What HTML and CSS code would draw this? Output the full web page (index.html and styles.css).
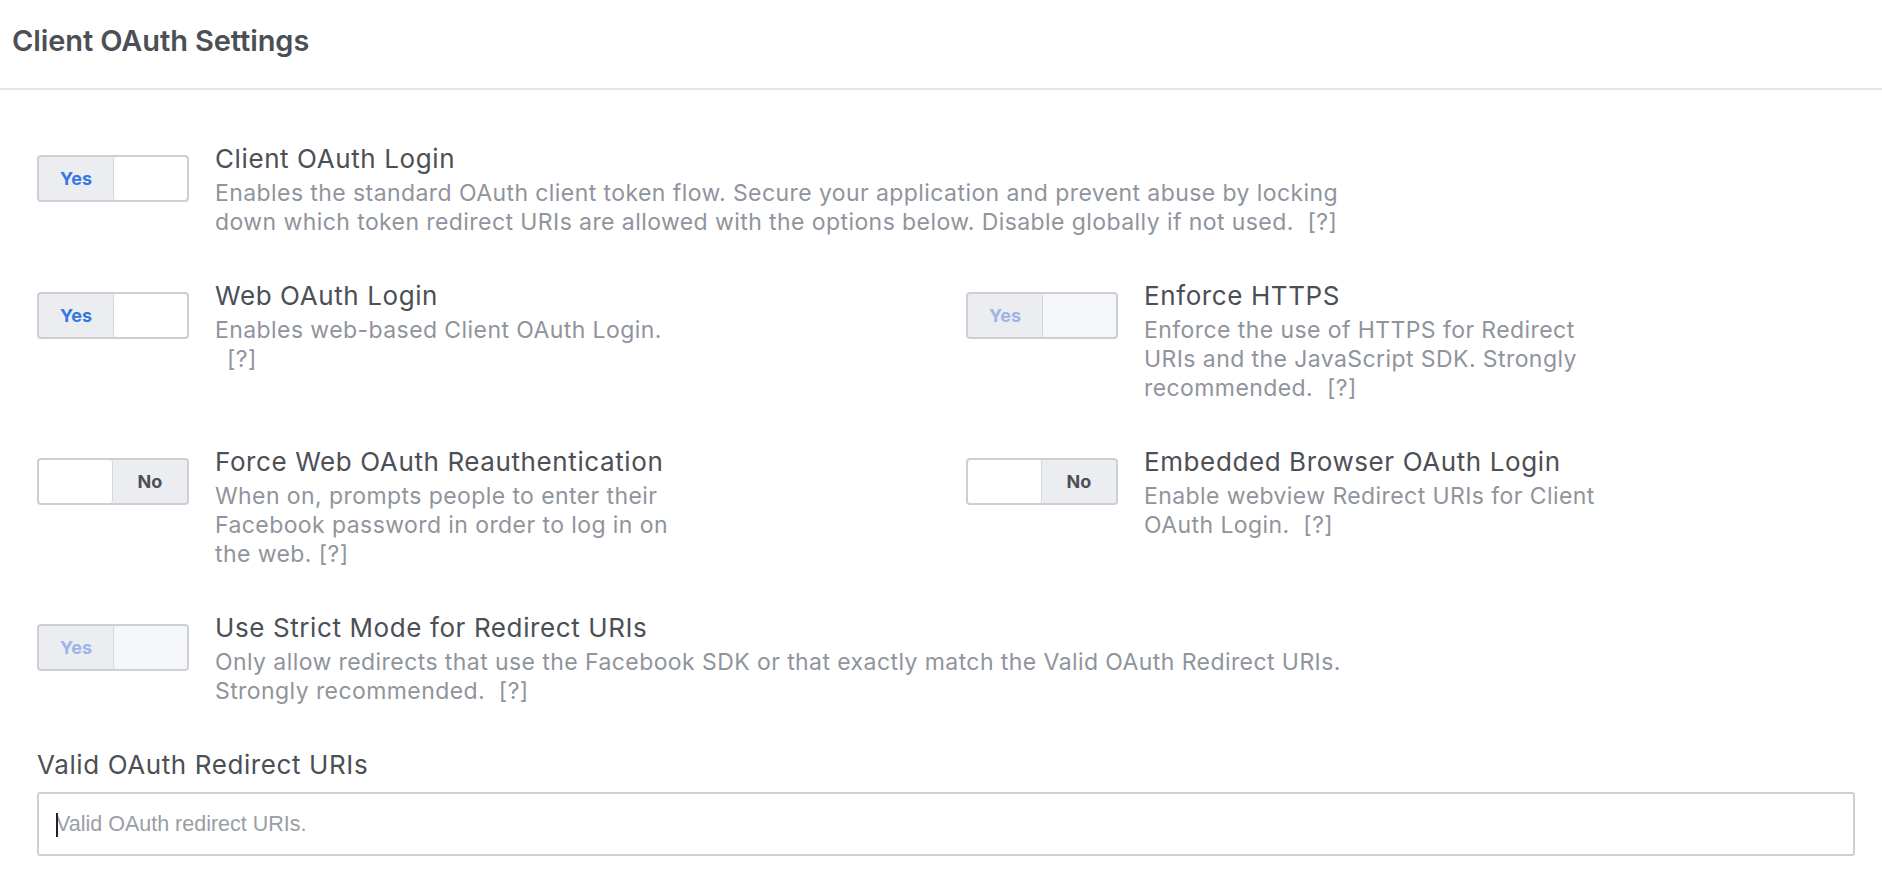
FILE: index.html
```html
<!DOCTYPE html>
<html lang="en">
<head>
<meta charset="utf-8">
<title>Client OAuth Settings</title>
<link rel="stylesheet" href="styles.css">
</head>
<body>
<div class="panel">
  <div class="panel-header">
    <h2 class="panel-title">Client OAuth Settings</h2>
  </div>
  <div class="panel-body">
    <div class="setting">
      <div class="toggle on"><span class="seg label">Yes</span><span class="seg knob"></span></div>
      <div class="setting-text">
        <div class="setting-title">Client OAuth Login</div>
        <div class="setting-desc">Enables the standard OAuth client token flow. Secure your application and prevent abuse by locking<br>down which token redirect URIs are allowed with the options below. Disable globally if not used.&nbsp; [?]</div>
      </div>
    </div>

    <div class="setting-grid">
      <div class="setting">
        <div class="toggle on"><span class="seg label">Yes</span><span class="seg knob"></span></div>
        <div class="setting-text">
          <div class="setting-title">Web OAuth Login</div>
          <div class="setting-desc">Enables web-based Client OAuth Login.<br><span class="indent">[?]</span></div>
        </div>
      </div>
      <div class="setting">
        <div class="toggle on disabled"><span class="seg label">Yes</span><span class="seg knob"></span></div>
        <div class="setting-text">
          <div class="setting-title">Enforce HTTPS</div>
          <div class="setting-desc">Enforce the use of HTTPS for Redirect<br>URIs and the JavaScript SDK. Strongly<br>recommended.&nbsp; [?]</div>
        </div>
      </div>

      <div class="setting">
        <div class="toggle off"><span class="seg knob"></span><span class="seg label">No</span></div>
        <div class="setting-text">
          <div class="setting-title">Force Web OAuth Reauthentication</div>
          <div class="setting-desc">When on, prompts people to enter their<br>Facebook password in order to log in on<br>the web. [?]</div>
        </div>
      </div>
      <div class="setting">
        <div class="toggle off"><span class="seg knob"></span><span class="seg label">No</span></div>
        <div class="setting-text">
          <div class="setting-title">Embedded Browser OAuth Login</div>
          <div class="setting-desc">Enable webview Redirect URIs for Client<br>OAuth Login.&nbsp; [?]</div>
        </div>
      </div>
    </div>

    <div class="setting">
      <div class="toggle on disabled"><span class="seg label">Yes</span><span class="seg knob"></span></div>
      <div class="setting-text">
        <div class="setting-title">Use Strict Mode for Redirect URIs</div>
        <div class="setting-desc">Only allow redirects that use the Facebook SDK or that exactly match the Valid OAuth Redirect URIs.<br>Strongly recommended.&nbsp; [?]</div>
      </div>
    </div>

    <div class="field">
      <label class="field-label" for="uris">Valid OAuth Redirect URIs</label>
      <div class="field-input"><span class="caret"></span><input id="uris" type="text" placeholder="Valid OAuth redirect URIs."></div>
    </div>
  </div>
</div>
</body>
</html>
```

FILE: styles.css
```css
* { box-sizing: border-box; }

html, body {
  margin: 0;
  padding: 0;
  background: #ffffff;
}

body {
  font-family: Inter, "Noto Sans", "Liberation Sans", sans-serif;
  color: #4b4f56;
}

.panel-header {
  height: 90px;
  display: flex;
  align-items: flex-start;
  padding: 22px 0 0 12px;
  border-bottom: 2px solid #e5e5e5;
}

.panel-title {
  margin: 0;
  font-size: 29px;
  line-height: 38px;
  font-weight: 600;
  color: #4b4f56;
  letter-spacing: -0.1px;
}

.panel-body {
  padding: 54px 27px 40px 37px;
}

.setting-grid {
  display: grid;
  grid-template-columns: 929px 1fr;
  row-gap: 44px;
  margin-bottom: 44px;
}

.panel-body > .setting {
  margin-bottom: 44px;
}

.setting {
  display: flex;
  align-items: flex-start;
}

.toggle {
  flex: none;
  display: flex;
  width: 152px;
  height: 47px;
  margin-top: 11px;
  margin-right: 26px;
  border: 2px solid #ccd0d5;
  border-radius: 4px;
  background: #ebedf0;
  overflow: hidden;
}

.seg {
  display: flex;
  align-items: center;
  justify-content: center;
  height: 100%;
}

.seg.label {
  width: 74px;
  font-size: 18px;
  font-weight: 700;
  color: #4b4f56;
}

.toggle.on .seg.label { color: #3578e5; }
.toggle.on.disabled .seg.label { color: #9cb4e8; }

.seg.knob {
  flex: 1;
  background: #ffffff;
  border-radius: 3px;
}

.toggle.on .seg.knob { border-left: 1px solid #d3d6db; }
.toggle.off .seg.knob { border-right: 1px solid #d3d6db; }
.toggle.disabled .seg.knob { background: #f5f6f7; }

.setting-text {
  min-width: 0;
}

.setting-title {
  font-size: 26px;
  line-height: 30px;
  letter-spacing: 0.6px;
  margin-bottom: 5px;
  color: #4b4f56;
  white-space: nowrap;
}

.setting-desc {
  font-size: 23px;
  line-height: 29px;
  letter-spacing: 0.42px;
  color: #90949c;
  white-space: nowrap;
}

.indent { padding-left: 12px; }

.field-label {
  display: block;
  font-size: 26px;
  line-height: 30px;
  letter-spacing: 0.6px;
  color: #4b4f56;
  margin-top: 3px;
  margin-bottom: 12px;
}

.field-input {
  position: relative;
  height: 64px;
  border: 2px solid #ccd0d5;
  border-radius: 3px;
  display: flex;
  align-items: center;
  padding-left: 17px;
}

.caret {
  position: absolute;
  left: 17px;
  top: 19px;
  width: 2px;
  height: 24px;
  background: #1d2129;
}

.field-input input {
  flex: 1;
  border: 0;
  outline: 0;
  padding: 0;
  margin: 0;
  background: transparent;
  font-family: "Liberation Sans", Inter, sans-serif;
  font-size: 21.5px;
  color: #1d2129;
}

.field-input input::placeholder {
  color: #9a9ea5;
}
```
